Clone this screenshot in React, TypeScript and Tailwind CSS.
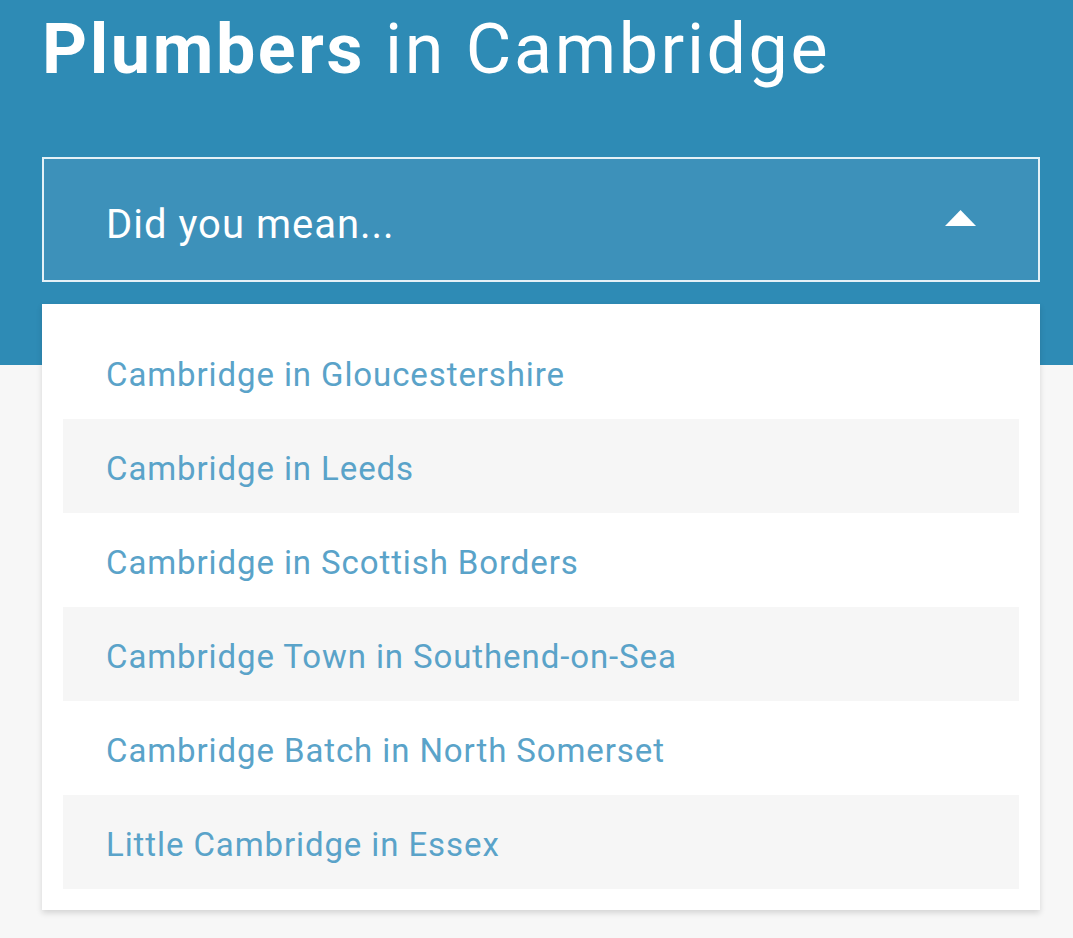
export default function App() {
  const places = [
    'Cambridge in Gloucestershire',
    'Cambridge in Leeds',
    'Cambridge in Scottish Borders',
    'Cambridge Town in Southend-on-Sea',
    'Cambridge Batch in North Somerset',
    'Little Cambridge in Essex',
  ];

  return (
    <div className="min-h-screen bg-[#f7f7f7] font-['Roboto',sans-serif]">
      <div className="h-[365px] bg-[#2e8bb5]" />
      <div className="-mt-[365px] px-[42px] pt-[14px] w-[1082px]">
        <h1 className="text-[70px] leading-none text-white tracking-[2.6px] h-[70px] whitespace-nowrap">
          <span className="font-bold">Plumbers</span> in Cambridge
        </h1>

        <div className="mt-[73px] h-[125px] border-2 border-[#e4f1f7] bg-[#3d91ba] flex items-center justify-between pl-[62px] pr-[62px]">
          <span className="mt-[10px] text-[40px] leading-none text-white tracking-[1px]">Did you mean...</span>
          <svg width="31" height="16" viewBox="0 0 31 16" className="mb-[4px]">
            <polygon points="0,16 15.5,0 31,16" fill="#ffffff" />
          </svg>
        </div>

        <div className="mt-[22px] bg-white p-[21px] shadow-[0_3px_6px_rgba(0,0,0,0.14)]">
          {places.map((p, i) => (
            <div
              key={p}
              className={`h-[94px] flex items-center pt-[5px] pl-[43px] text-[33px] text-[#5aa3c9] tracking-[0.9px] ${i % 2 === 1 ? 'bg-[#f6f6f6]' : 'bg-white'}`}
            >
              {p}
            </div>
          ))}
        </div>
      </div>
    </div>
  );
}
